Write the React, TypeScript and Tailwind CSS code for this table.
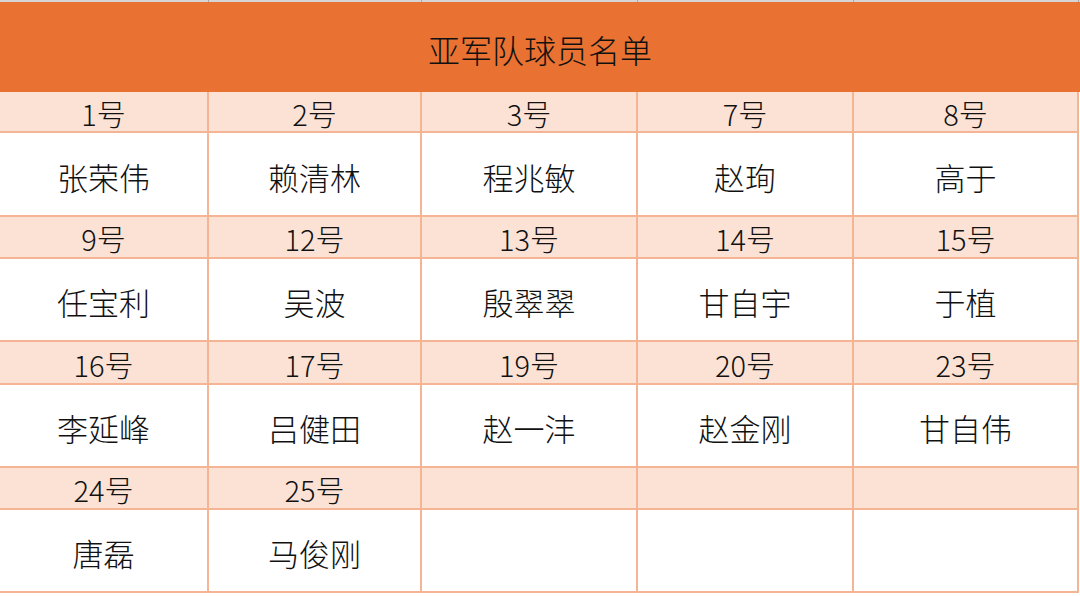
const cols = ["w-[209px]", "w-[213px]", "w-[216px]", "w-[216px]", "w-[225px]"];

const rows: { nums: string[]; names: string[]; h: [string, string] }[] = [
  { nums: ["1号", "2号", "3号", "7号", "8号"], names: ["张荣伟", "赖清林", "程兆敏", "赵珣", "高于"], h: ["h-[41px]", "h-[84px]"] },
  { nums: ["9号", "12号", "13号", "14号", "15号"], names: ["任宝利", "吴波", "殷翠翠", "甘自宇", "于植"], h: ["h-[42px]", "h-[83px]"] },
  { nums: ["16号", "17号", "19号", "20号", "23号"], names: ["李延峰", "吕健田", "赵一沣", "赵金刚", "甘自伟"], h: ["h-[43px]", "h-[83px]"] },
  { nums: ["24号", "25号", "", "", ""], names: ["唐磊", "马俊刚", "", "", ""], h: ["h-[42px]", "h-[83px]"] },
];

const font = { fontFamily: '"Microsoft YaHei", "Noto Sans CJK SC", "Noto Sans", sans-serif' };

function Row({ cells, tall, h }: { cells: string[]; tall?: boolean; h: string }) {
  return (
    <div className="flex">
      {cells.map((c, i) => (
        <div
          key={i}
          className={`${cols[i]} ${h} ${
            tall ? "bg-white text-[31px] pt-[4px]" : "bg-[#FBE2D5] text-[29px] pt-[3px]"
          } flex shrink-0 items-center justify-center border-b-2 border-r-2 border-[#F5B493] font-light text-[#111] leading-none`}
        >
          {c}
        </div>
      ))}
    </div>
  );
}

export default function App() {
  return (
    <div className="h-[596px] w-[1080px] overflow-hidden bg-white" style={font}>
      <div className="flex h-[2px] bg-[#d6d6d6]">
        {cols.map((c, i) => (
          <div key={i} className={`${c} shrink-0 border-r border-[#a8a8a8]`} />
        ))}
      </div>
      <div className="flex h-[90px] items-center justify-center bg-[#E97132] pt-[4px] text-[32px] font-light text-[#111]">
        亚军队球员名单
      </div>
      {rows.map((r, i) => (
        <div key={i}>
          <Row cells={r.nums} h={r.h[0]} />
          <Row cells={r.names} h={r.h[1]} tall />
        </div>
      ))}
    </div>
  );
}
